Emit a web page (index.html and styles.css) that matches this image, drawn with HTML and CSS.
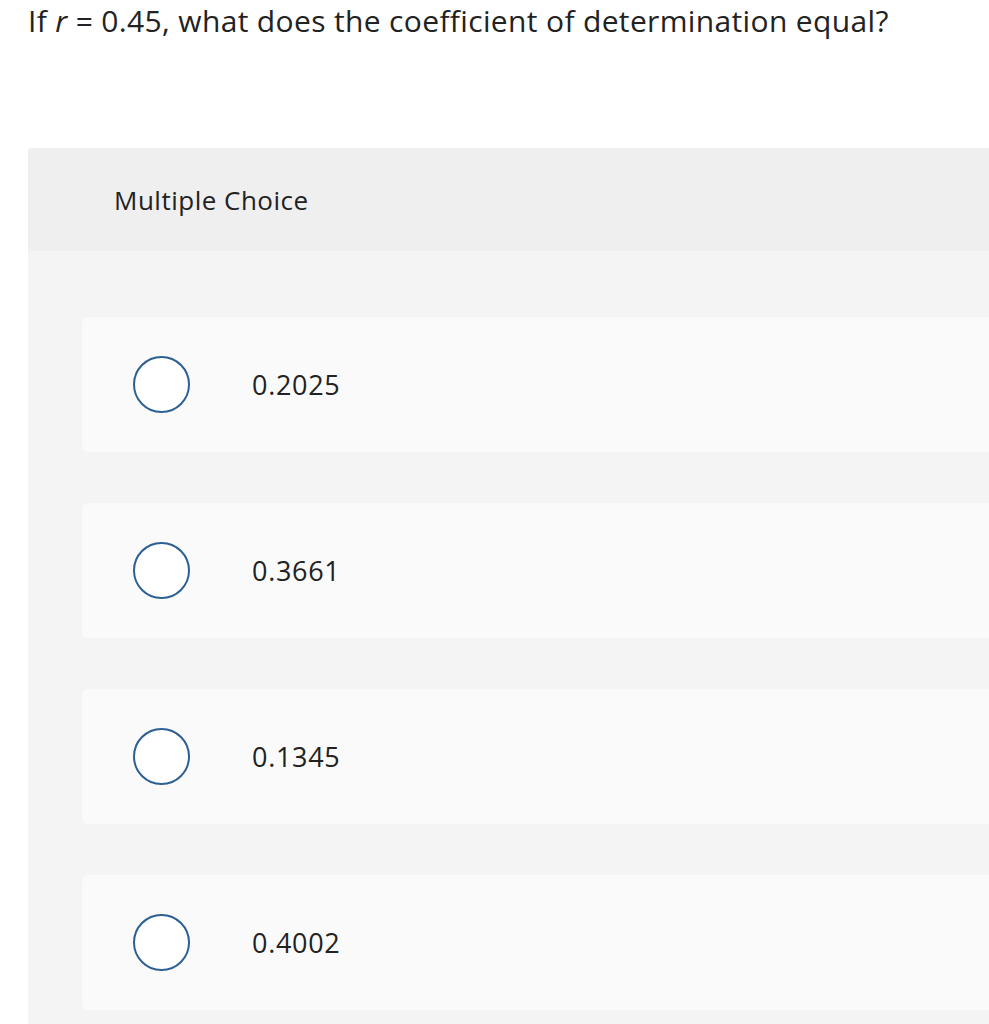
FILE: index.html
```html
<!DOCTYPE html>
<html>
<head>
<meta charset="utf-8">
<link rel="stylesheet" href="styles.css">
</head>
<body>
<p class="question">If <i>r</i> = 0.45, what does the coefficient of determination equal?</p>
<div class="card">
  <div class="card-head">Multiple Choice</div>
  <div class="card-body">
    <div class="option"><span class="radio"></span><span class="label">0.2025</span></div>
    <div class="option"><span class="radio"></span><span class="label">0.3661</span></div>
    <div class="option"><span class="radio"></span><span class="label">0.1345</span></div>
    <div class="option"><span class="radio"></span><span class="label">0.4002</span></div>
  </div>
</div>
</body>
</html>
```
FILE: styles.css
```css
html, body {
  margin: 0;
  padding: 0;
  background: #ffffff;
}
body {
  font-family: "Open Sans", "Liberation Sans", sans-serif;
  color: #222222;
  overflow: hidden;
}
.question {
  margin: 0;
  padding: 2px 0 0 28px;
  font-size: 30px;
  line-height: 38px;
  letter-spacing: 0.35px;
}
.question i {
  font-style: italic;
}
.card {
  margin: 108px 0 0 28px;
  border-radius: 4px 0 0 0;
  background: #f4f4f4;
  overflow: hidden;
  height: 900px;
}
.card-head {
  background: #efefef;
  height: 103px;
  box-sizing: border-box;
  padding-left: 86px;
  display: flex;
  align-items: center;
  font-size: 26px;
  letter-spacing: 0.5px;
}
.card-body {
  padding: 66px 0 0 54px;
  display: flex;
  flex-direction: column;
  gap: 51px;
}
.option {
  background: #fafafa;
  border-radius: 6px 0 0 6px;
  height: 135px;
  display: flex;
  align-items: center;
  padding-left: 51px;
}
.radio {
  width: 53px;
  height: 53px;
  border: 2px solid #2c5f94;
  border-radius: 50%;
  background: #ffffff;
  flex: none;
}
.label {
  margin-left: 62px;
  font-size: 27px;
  letter-spacing: 0.7px;
}
```
